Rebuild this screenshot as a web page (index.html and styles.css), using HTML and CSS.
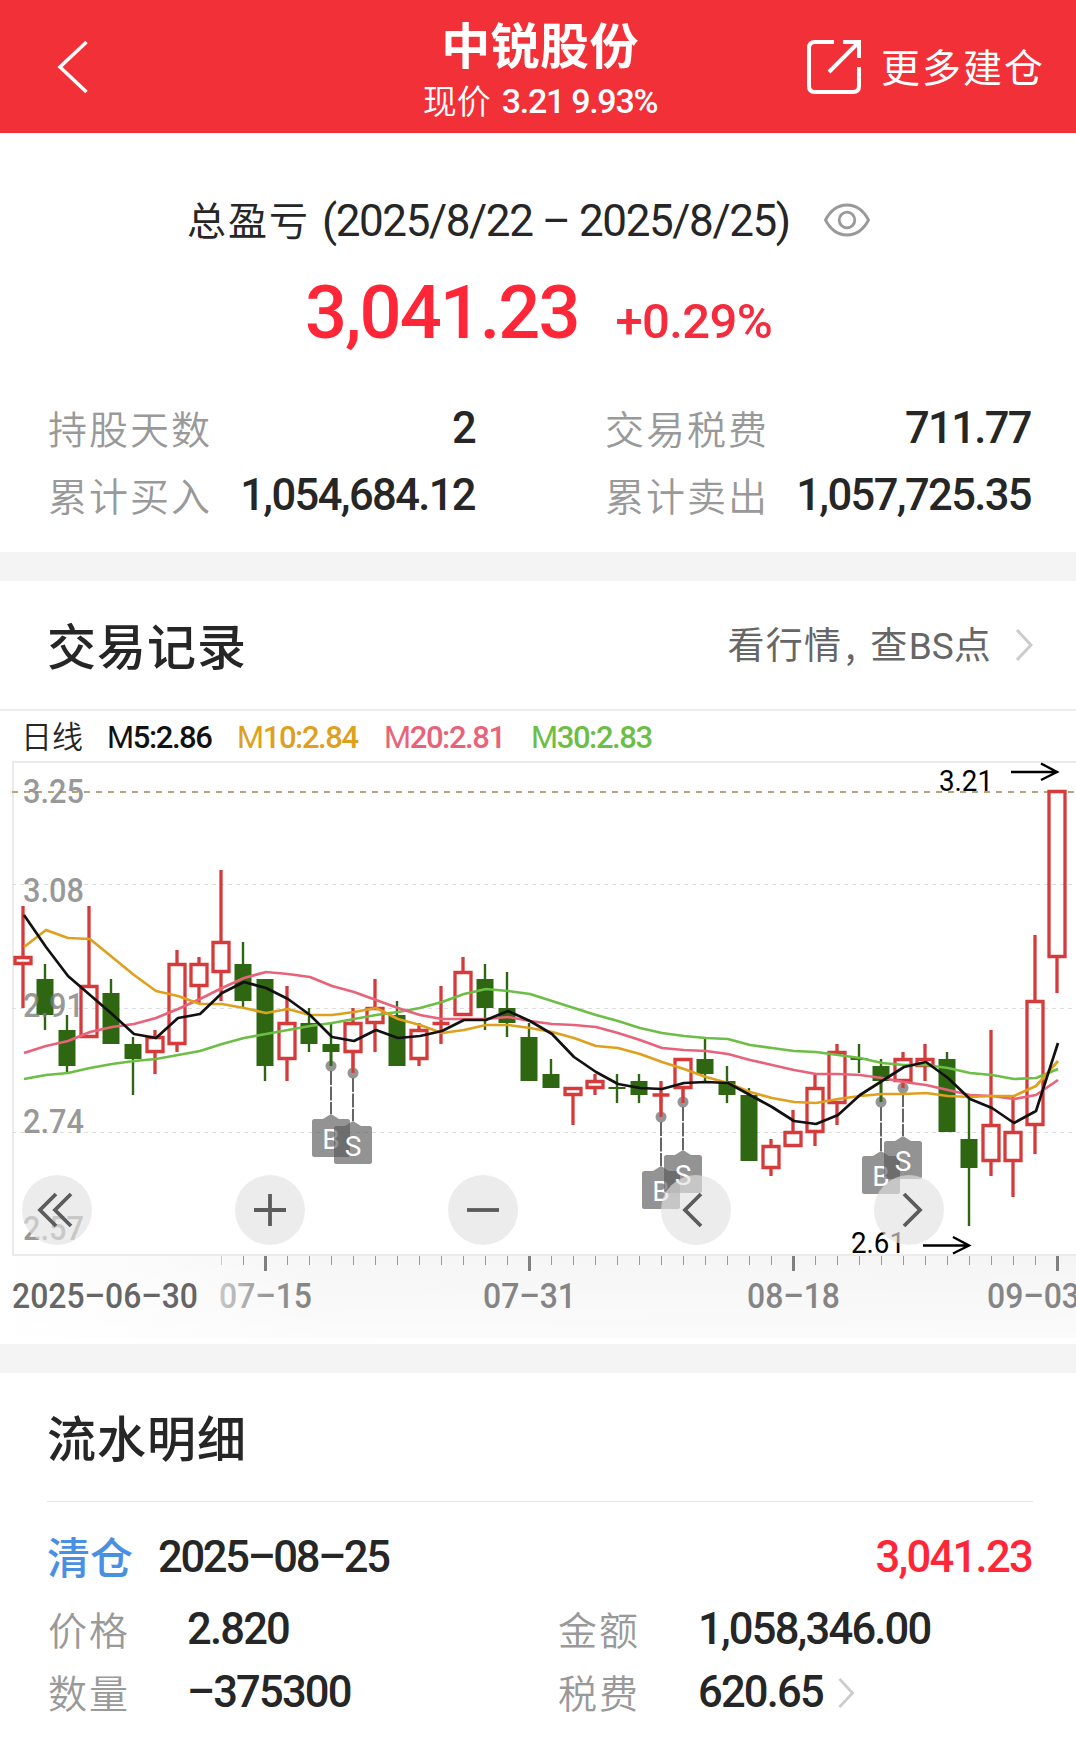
FILE: index.html
```html
<!DOCTYPE html>
<html lang="zh-CN">
<head>
<meta charset="utf-8">
<title>中锐股份</title>
<link rel="stylesheet" href="styles.css">
</head>
<body>
<header class="topbar">
  <svg class="back" width="32" height="56" viewBox="0 0 32 56"><path d="M29.500 3L3 28L29.500 53"/></svg>
  <div class="titles">
    <h1 class="stock">中锐股份</h1>
    <div class="quote"><span class="quote-label">现价</span><span class="num quote-num">3.21 9.93%</span></div>
  </div>
  <div class="more">
    <svg class="share" width="54" height="54" viewBox="0 0 54 54"><path d="M27 2H8Q2 2 2 8V46Q2 52 8 52H46Q52 52 52 46V27M36 2H52V18M51 3L22 32"/></svg>
    <span>更多建仓</span>
  </div>
</header>

<section class="summary">
  <div class="period">
    <span class="period-label">总盈亏</span>
    <span class="num period-range">(2025/8/22 – 2025/8/25)</span>
    <svg class="eye" width="46" height="34" viewBox="0 0 46 34"><path d="M1.500 17C12 -3 34 -3 44.500 17C34 37 12 37 1.500 17Z"/><circle cx="23" cy="17" r="7.800"/></svg>
  </div>
  <div class="profit">
    <span class="num profit-amount">3,041.23</span>
    <span class="num profit-rate">+0.29%</span>
  </div>
  <div class="stats">
    <div class="stat"><span class="label">持股天数</span><span class="num value">2</span></div>
    <div class="stat"><span class="label">交易税费</span><span class="num value">711.77</span></div>
    <div class="stat"><span class="label">累计买入</span><span class="num value">1,054,684.12</span></div>
    <div class="stat"><span class="label">累计卖出</span><span class="num value">1,057,725.35</span></div>
  </div>
</section>

<section class="trades">
  <div class="section-head">
    <h2>交易记录</h2>
    <a class="link"><span>看行情<span class="comma">,</span>查<span class="latin">BS</span>点</span><svg class="chevron" width="18" height="34" viewBox="0 0 18 34"><path d="M2 2L16 17L2 32"/></svg></a>
  </div>
  <div class="legend">
    <span class="legend-kind">日线</span>
    <span class="num ma5"><i>M</i>5:2.86</span>
    <span class="num ma10"><i>M</i>10:2.84</span>
    <span class="num ma20"><i>M</i>20:2.81</span>
    <span class="num ma30"><i>M</i>30:2.83</span>
  </div>
  <div class="chart">
    <svg id="kline" width="1076" height="577" viewBox="0 761 1076 577"></svg>
    <div class="controls">
      <button class="ctl"><svg width="70" height="70" viewBox="0 0 70 70"><path d="M34 19L18 35L34 51M49 19L33 35L49 51"/></svg></button>
      <button class="ctl"><svg width="70" height="70" viewBox="0 0 70 70"><path d="M35 19V51M19 35H51"/></svg></button>
      <button class="ctl"><svg width="70" height="70" viewBox="0 0 70 70"><path d="M19 35H51"/></svg></button>
      <button class="ctl"><svg width="70" height="70" viewBox="0 0 70 70"><path d="M40 19L24 35L40 51"/></svg></button>
      <button class="ctl"><svg width="70" height="70" viewBox="0 0 70 70"><path d="M30 19L46 35L30 51"/></svg></button>
    </div>
  </div>
</section>

<section class="details">
  <div class="section-head"><h2>流水明细</h2></div>
  <div class="record">
    <div class="record-head"><span class="kind">清仓</span><span class="num date">2025–08–25</span><span class="num gain">3,041.23</span></div>
    <div class="record-row"><span class="label">价格</span><span class="num value">2.820</span><span class="label">金额</span><span class="num value">1,058,346.00</span></div>
    <div class="record-row"><span class="label">数量</span><span class="num value">–375300</span><span class="label">税费</span><span class="num value">620.65<svg class="chevron" width="18" height="32" viewBox="0 0 18 34"><path d="M2 2L16 17L2 32"/></svg></span></div>
  </div>
</section>
<script src="chart.js"></script>
</body>
</html>
```
FILE: styles.css
```css
* { box-sizing: border-box; }
body {
  margin: 0;
  width: 1076px;
  height: 1739px;
  overflow: hidden;
  background: #fff;
  color: #262626;
  font-family: "Noto Sans CJK SC", sans-serif;
}
h1, h2 { margin: 0; font-weight: 500; }
svg { display: block; fill: none; flex: none; }
.num { font-family: Roboto, sans-serif; font-weight: 500; white-space: nowrap; }

.topbar {
  display: grid;
  grid-template-columns: 340px 1fr 340px;
  height: 133px;
  background: #f23038;
  color: #fff;
}
.back { margin: 39px 0 0 57px; stroke: #fff; stroke-width: 3.5; }
.titles { display: flex; flex-direction: column; align-items: center; padding: 13px 0 0 4px; }
.stock { font-size: 49px; line-height: 60px; font-weight: 700; letter-spacing: .4px; }
.quote { display: flex; align-items: center; gap: 11px; height: 56px; }
.quote-label { padding-bottom: 3px; font-size: 34px; line-height: 54px; font-weight: 350; }
.quote-num { font-size: 34px; letter-spacing: -1.3px; }
.more { display: flex; align-items: center; gap: 20px; padding-left: 71px; font-size: 39px; letter-spacing: 2px; white-space: nowrap; }
.more span { padding-bottom: 3px; }
.share { stroke: #fff; stroke-width: 4; }

.summary { height: 419px; padding: 57px 44px 0 49px; }
.period { display: flex; align-items: center; height: 60px; padding-left: 138px; }
.period-label { padding-bottom: 4px; font-size: 39px; letter-spacing: 2px; }
.period-range { margin-left: 12px; padding-top: 2px; font-size: 44px; font-weight: 400; letter-spacing: -1.4px; }
.eye { margin-left: 34px; stroke: #999; stroke-width: 2.8; }
.profit { display: flex; align-items: baseline; height: 80px; margin-top: 23px; padding-left: 256px; line-height: 80px; color: #ff2638; }
.profit-amount { font-size: 74px; letter-spacing: -2px; }
.profit-rate { margin-left: 37px; font-size: 49px; letter-spacing: -.6px; color: #f52c3e; }
.stats { display: grid; grid-template-columns: 427px 426px; column-gap: 130px; margin: 41px 0 0 -1px; }
.stat { display: flex; align-items: center; justify-content: space-between; height: 67px; }
.label { padding-bottom: 2px; font-size: 39px; letter-spacing: 2px; font-weight: 350; color: #999; }
.value { padding-top: 1px; font-size: 43.5px; letter-spacing: -1.6px; }

.trades { border-top: 29px solid #f4f4f4; }
.section-head { display: flex; align-items: center; justify-content: space-between; height: 128px; margin-left: 47px; margin-right: 43px; }
.section-head h2 { padding-bottom: 3px; font-size: 49px; letter-spacing: 1px; }
.link { display: flex; align-items: center; gap: 23px; font-size: 37px; letter-spacing: 1.3px; color: #666; }
.link > span { padding-bottom: 4px; }
.link .comma { display: inline-block; width: 28px; padding-left: 3px; }
.link .latin { font-family: Roboto, sans-serif; letter-spacing: 0; }
.chevron { stroke: #ccc; stroke-width: 3; }

.legend { display: flex; align-items: center; height: 52px; padding-left: 21px; border-top: 2px solid #eee; font-size: 31px; }
.legend-kind { width: 86px; padding-bottom: 3px; font-weight: 350; }
.legend .num { padding-top: 2px; font-size: 31px; letter-spacing: -1.4px; }
.legend i { font-style: normal; font-weight: 400; }
.ma5 { width: 130px; color: #111; }
.ma10 { width: 147px; color: #dfa01d; }
.ma20 { width: 147px; color: #e8637a; }
.ma30 { color: #6cbe45; }

.chart { position: relative; height: 583px; }
.controls { position: absolute; left: 22px; top: 414px; display: flex; gap: 143px; }
.ctl { width: 70px; height: 70px; padding: 0; border: 0; border-radius: 50%; background: rgba(226, 226, 226, .65); }
.ctl svg { stroke: #5c5c5c; stroke-width: 3.8; }

.grid { stroke: #ddd; stroke-width: 1.2; stroke-dasharray: 4 4; }
.last { stroke: #b5a57d; stroke-width: 1.8; stroke-dasharray: 6 6; }
.frame { stroke: #ebebeb; stroke-width: 2; }
.up { stroke: #d63b3b; stroke-width: 3.3; }
.down { fill: #2f6612; }
.line { stroke-width: 2.7; stroke-linejoin: round; }
.line5 { stroke: #111; }
.line10 { stroke: #dfa01d; }
.line20 { stroke: #e8637a; }
.line30 { stroke: #6cbe45; }
.price { font: 500 34px Roboto, sans-serif; fill: #7d7d7d; fill-opacity: .8; }
.mark { font: 400 29px Roboto, sans-serif; fill: #000; }
.arrow { stroke: #000; stroke-width: 2.4; }
.dot { fill: #8a8a8a; fill-opacity: .9; }
.stem { stroke: #666; stroke-width: 2; stroke-dasharray: 14 1.5; }
.flag { fill: #595959; fill-opacity: .65; }
.flag-text { font: 400 28px Roboto, sans-serif; fill: #fff; text-anchor: middle; }
.tick { stroke: #999; stroke-width: 1; }
.tick-major { stroke: #808080; stroke-width: 3; }
.day { font: 500 34.5px Roboto, sans-serif; fill: #858585; }
.day-first { fill: #666; }

.details { border-top: 29px solid #f4f4f4; }
.record { margin: 0 43px 0 47px; padding: 20px 1px 0 0; border-top: 1px solid #e6e6e6; }
.record-head { display: flex; align-items: center; height: 70px; margin-bottom: 5px; }
.kind { width: 111px; padding-bottom: 4px; font-size: 43px; font-weight: 500; color: #4a90e2; white-space: nowrap; }
.date { font-size: 43.5px; letter-spacing: -2.3px; }
.gain { margin-left: auto; font-size: 43.5px; letter-spacing: -1.7px; color: #ff2638; }
.record-row { display: grid; grid-template-columns: 140px 370px 141px 1fr; align-items: center; height: 63.5px; }
.record-row .label { margin-left: 1px; }
.record-row .value { display: flex; align-items: center; gap: 14px; letter-spacing: -1.8px; }
```
FILE: chart.js
```js
// [direction, body top, body bottom, high, low]
const candles = [
  ['u',956,965,906,1008],['d',979,1015,964,1030],['d',1030,1066,1015,1072],['u',985,1038,906,1038],
  ['d',993,1044,979,1044],['d',1044,1059,1037,1095],['u',1036,1053,1030,1074],['u',963,1045,950,1052],
  ['u',963,987,957,1004],['u',941,973,870,1001],['d',964,1001,942,1007],['d',979,1066,979,1081],
  ['u',1022,1060,986,1081],['d',1023,1044,1008,1052],['d',1044,1052,1023,1066],['u',1022,1053,1008,1073],
  ['u',1007,1024,979,1052],['d',1015,1066,1001,1066],['u',1029,1060,1023,1066],['u',1022,1025,986,1044],
  ['u',971,1016,957,1016],['d',979,1008,964,1030],['d',1008,1023,972,1037],['d',1037,1081,1023,1081],
  ['d',1074,1088,1059,1088],['u',1087,1096,1087,1125],['u',1080,1089,1074,1095],['d',1087,1089,1074,1103],
  ['d',1081,1095,1074,1103],['u',1093.5,1096.5,1081,1117],['u',1058,1089,1058,1103],['d',1059,1074,1039,1081],
  ['d',1081,1095,1066,1103],['d',1095,1161,1088,1161],['u',1145,1169,1139,1176],['u',1131,1147,1110,1147],
  ['u',1087,1133,1075,1146],['u',1051,1104,1044,1125],['d',1058,1060,1044,1073],['d',1066,1081,1059,1102],
  ['u',1058,1082,1052,1088],['u',1058,1067,1044,1081],['d',1059,1132,1052,1132],['d',1139,1168,1096,1226],
  ['u',1124,1162,1030,1176],['u',1131,1162,1096,1197],['u',1000,1126,935,1154],['u',790,958,790,993]
];
const averages = {
  5: [915,947,976,995,1014,1034,1038,1018,1014,993,982,988,999,1015,1037,1041,1030,1038,1036,1031,1020,1020,1011,1021,1034,1057,1072,1084,1088,1089,1083,1082,1083,1095,1107,1121,1124,1115,1095,1081,1067,1062,1078,1099,1108,1123,1111,1043],
  10: [947,930,938,939,957,975,991,996,1004,1004,1008,1013,1009,1015,1015,1012,1008,1019,1025,1033,1030,1025,1025,1028,1032,1038,1046,1048,1054,1062,1069,1077,1083,1092,1098,1102,1103,1099,1096,1094,1094,1093,1096,1097,1096,1096,1086,1061],
  20: [1053,1046,1041,1032,1027,1024,1018,1009,999,988,978,972,974,977,986,992,1000,1008,1015,1019,1019,1019,1017,1021,1024,1025,1027,1033,1040,1048,1050,1051,1054,1060,1065,1070,1074,1074,1075,1078,1082,1085,1090,1095,1096,1099,1095,1080],
  30: [1079,1075,1073,1068,1064,1061,1059,1055,1051,1044,1038,1034,1030,1026,1023,1019,1015,1012,1008,1002,994,989,991,994,1001,1008,1015,1021,1028,1033,1036,1038,1039,1045,1048,1051,1052,1055,1058,1063,1065,1065,1068,1073,1075,1079,1078,1069]
};
// [x, dot y, flag tip y, side]
const flags = [[331,1066,1114,'B'],[353,1073,1121,'S'],[661,1117,1166,'B'],[683,1102,1150,'S'],[881,1102,1151,'B'],[903,1088,1136,'S']];
const xAt = i => 23 + 22 * i;
const out = [];
const text = (cls, x, y, w, s, extra = '') =>
  `<text class="${cls}" x="${x}" y="${y}" textLength="${w}" lengthAdjust="spacingAndGlyphs" ${extra}>${s}</text>`;

out.push(`<defs>
  <linearGradient id="axis" x1="0" x2="1"><stop offset="0" stop-color="#fff"/><stop offset=".3" stop-color="#f6f6f6"/><stop offset="1" stop-color="#f5f5f5"/></linearGradient>
  <linearGradient id="axisFade" x1="0" x2="0" y1="0" y2="1"><stop offset="0" stop-color="#fff" stop-opacity="0"/><stop offset="1" stop-color="#fff" stop-opacity=".6"/></linearGradient>
  <linearGradient id="dayFade" gradientUnits="userSpaceOnUse" x1="215" x2="315" y1="0" y2="0"><stop offset="0" stop-color="#ccc"/><stop offset=".5" stop-color="#999"/><stop offset="1" stop-color="#808080"/></linearGradient>
</defs>
<rect x="0" y="1256" width="1076" height="82" fill="url(#axis)"/><rect x="0" y="1256" width="1076" height="82" fill="url(#axisFade)"/>
<path class="frame" d="M1076 762H13V1255H1076"/>`);
for (const y of [884.5, 1008.5, 1132.5]) out.push(`<path class="grid" d="M12 ${y}H1073"/>`);
out.push('<path class="last" d="M12 792H1076"/>');

candles.forEach(([dir, top, bottom, high, low], i) => {
  const x = xAt(i);
  if (dir === 'd') {
    out.push(`<path class="down" d="M${x - 8.5} ${top}h17V${bottom}h-17ZM${x - 1.2} ${high}h2.400V${low}h-2.400Z"/>`);
  } else if (bottom - top < 4) {
    out.push(`<path class="up" d="M${x - 8.5} ${(top + bottom) / 2}h17M${x} ${high}V${low}"/>`);
  } else {
    out.push(`<path class="up" d="M${x - 8} ${top + 1.5}h16V${bottom - 1.5}h-16ZM${x} ${high}V${top}M${x} ${bottom}V${low}"/>`);
  }
});
for (const [x, dot, tip] of flags) {
  const [dir, , bottom, , low] = candles[(x - 23) / 22];
  const color = dir === 'u' ? '#d63b3b' : '#2f6612';
  out.push(`<circle class="dot" cx="${x}" cy="${dot}" r="5.500"/><path class="stem" d="M${x} ${dot + 5}V${tip}"/>`);
  out.push(`<path d="M${x} ${bottom}V${low}" stroke="${color}" stroke-width="2.800"/>`);
}
for (const n of [30, 20, 10, 5]) {
  out.push(`<polyline class="line line${n}" points="${averages[n].map((y, i) => `${xAt(i) + 1},${y}`).join(' ')}"/>`);
}
[['3.25', 803], ['3.08', 902], ['2.91', 1016.5], ['2.74', 1132.5], ['2.57', 1240]].forEach(([s, y]) => out.push(text('price', 23, y, 61, s)));
for (const [x, , tip, side] of flags) {
  const t = tip + 5;
  out.push(`<path class="flag" d="M${x - 8} ${t}L${x} ${tip}L${x + 8} ${t}H${x + 16.5}q2.500 0 2.500 2.500V${t + 35.5}q0 2.500 -2.500 2.500H${x - 16.5}q-2.500 0 -2.500 -2.500V${t + 2.5}q0 -2.500 2.500 -2.500Z"/><text class="flag-text" x="${x}" y="${t + 30}">${side}</text>`);
}
out.push(text('mark', 939, 791, 54, '3.21'), '<path class="arrow" d="M1011 772H1057M1041 763.500L1057 772L1041 780"/>');
out.push(text('mark', 851, 1252.5, 54, '2.61'), '<path class="arrow" d="M923 1245.500H969M953 1237L969 1245.500L953 1253.500"/>');

for (let i = 9; i < 48; i++) {
  const major = [11, 23, 35, 47].includes(i);
  out.push(`<path class="${major ? 'tick-major' : 'tick'}" d="M${xAt(i) + .5} 1256v${major ? 15 : 9}" ${i === 9 ? 'opacity=".5"' : ''}/>`);
}
out.push(text('day day-first', 12, 1308, 186, '2025–06–30'));
out.push(text('day', 219, 1308, 93, '07–15', 'style="fill:url(#dayFade)"'));
out.push(text('day', 483, 1308, 93, '07–31'), text('day', 747, 1308, 93, '08–18'), text('day', 987, 1308, 93, '09–03'));
document.getElementById('kline').innerHTML = out.join('');
```
